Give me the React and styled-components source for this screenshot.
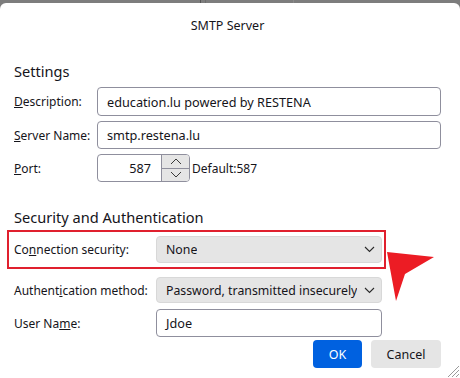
import React from 'react';
import styled, { createGlobalStyle } from 'styled-components';

const GlobalStyle = createGlobalStyle`
  html, body {
    margin: 0;
    padding: 0;
    height: 100%;
    overflow: hidden;
  }
  body {
    background:
      linear-gradient(to right, transparent 200px, #555 200px, #555 201px, transparent 201px, transparent 205px, #6e6e6e 205px, #6e6e6e 206px, transparent 206px, transparent 293px, #8a8a8a 293px, #8a8a8a 294px, transparent 294px),
      #7d7d7d;
    background-size: 100% 3px;
    background-repeat: no-repeat;
    background-color: #7d7d7d;
    font-family: "Noto Sans", "Open Sans", sans-serif;
    color: #15141a;
  }
`;

const Dialog = styled.div`
  position: relative;
  margin-top: 3px;
  height: 375px;
  background: #fff;
  border-radius: 6px 6px 0 0;
  padding: 0 19px 0 14px;
  box-sizing: border-box;
  font-size: 12px;
`;

const Title = styled.div`
  padding-top: 15px;
  height: 58px;
  box-sizing: border-box;
  text-align: center;
  font-size: 12.5px;
  line-height: 16px;
`;

const Heading = styled.div`
  font-size: 14.6px;
  line-height: 20px;
  margin: ${(p) => p.$top || 0}px 0 ${(p) => p.$bottom || 0}px;
`;

const SettingsGrid = styled.div`
  display: grid;
  grid-template-columns: 83px 344px;
  row-gap: 5px;
  align-items: center;
`;

const Label = styled.label`
  font-size: 12px;
  white-space: nowrap;
`;

const TextInput = styled.div`
  height: ${(p) => p.$h || 28}px;
  box-sizing: border-box;
  border: 1px solid #8f8f9d;
  border-radius: 4px;
  background: #fff;
  display: flex;
  align-items: center;
  padding: 0 9px;
  font-size: 12.7px;
`;

const PortRow = styled.div`
  display: flex;
  align-items: center;
`;

const PortBox = styled.div`
  width: 93px;
  height: 28px;
  box-sizing: border-box;
  border: 1px solid #8f8f9d;
  border-radius: 4px;
  display: flex;
  align-items: center;
  overflow: hidden;
`;

const PortValue = styled.div`
  flex: 1;
  text-align: right;
  padding-right: 10px;
  font-size: 12.7px;
`;

const Spinner = styled.div`
  width: 27px;
  height: 100%;
  display: flex;
  flex-direction: column;
  border-left: 1px solid #8f8f9d;
`;

const SpinButton = styled.div`
  flex: 1;
  background: #e5e5e5;
  display: flex;
  align-items: center;
  justify-content: center;
  & + & {
    border-top: 1px solid #8f8f9d;
  }
`;

const DefaultText = styled.span`
  margin-left: 2px;
  font-size: 12px;
`;

const SecurityGrid = styled.div`
  display: flex;
  flex-direction: column;
`;

const Row = styled.div`
  display: grid;
  grid-template-columns: 142px 226px;
  align-items: center;
  margin-top: ${(p) => p.$top || 0}px;
`;

const HighlightRow = styled(Row)`
  margin-left: -7px;
  width: max-content;
  padding: 4px 2px 4px 5px;
  border: 2px solid #e0202e;
`;

const Select = styled.div`
  height: ${(p) => p.$h || 27}px;
  box-sizing: border-box;
  background: #e5e5e5;
  border: 1px solid #d8d8d8;
  border-radius: 4px;
  display: flex;
  align-items: center;
  justify-content: space-between;
  gap: 3px;
  padding: 0 6px 0 9px;
  font-size: 12.3px;
  white-space: nowrap;
  overflow: hidden;
`;

const SelectText = styled.span`
  overflow: hidden;
`;

const ButtonRow = styled.div`
  display: flex;
  justify-content: flex-end;
  gap: 9px;
  margin-top: 3px;
`;

const Button = styled.div`
  height: 28px;
  width: ${(p) => p.$w}px;
  border-radius: 4px;
  display: flex;
  align-items: center;
  justify-content: center;
  font-size: 12.5px;
  background: ${(p) => (p.$primary ? '#0061e0' : '#e5e5e5')};
  color: ${(p) => (p.$primary ? '#fff' : '#15141a')};
`;

const Arrow = styled.svg`
  position: absolute;
  left: 384px;
  top: 246px;
`;

const Grip = styled.svg`
  position: absolute;
  right: 0;
  bottom: 0;
`;

const Chevron = ({ up }) => (
  <svg width="12" height="7" viewBox="0 0 12 7">
    <path
      d={up ? 'M1 6 L6 1 L11 6' : 'M1 1 L6 6 L11 1'}
      fill="none"
      stroke="#3a3a3a"
      strokeWidth="1"
    />
  </svg>
);

const DropChevron = () => (
  <svg width="11" height="7" viewBox="0 0 11 7" style={{ flexShrink: 0 }}>
    <path d="M1 1 L5.5 5.5 L10 1" fill="none" stroke="#2b2b2b" strokeWidth="1.1" />
  </svg>
);

export default function App() {
  return (
    <>
      <GlobalStyle />
      <Dialog>
        <Title>SMTP Server</Title>

        <Heading $bottom={6}>Settings</Heading>
        <SettingsGrid>
          <Label>
            <u>D</u>escription:
          </Label>
          <TextInput $h={29}>education.lu powered by RESTENA</TextInput>
          <Label>
            <u>S</u>erver Name:
          </Label>
          <TextInput>smtp.restena.lu</TextInput>
          <Label>
            <u>P</u>ort:
          </Label>
          <PortRow>
            <PortBox>
              <PortValue>587</PortValue>
              <Spinner>
                <SpinButton>
                  <Chevron up />
                </SpinButton>
                <SpinButton>
                  <Chevron />
                </SpinButton>
              </Spinner>
            </PortBox>
            <DefaultText>Default:587</DefaultText>
          </PortRow>
        </SettingsGrid>

        <Heading $top={25} $bottom={3}>
          Security and Authentication
        </Heading>
        <SecurityGrid>
          <HighlightRow>
            <Label>
              Co<u>n</u>nection security:
            </Label>
            <Select>
              <SelectText>None</SelectText>
              <DropChevron />
            </Select>
          </HighlightRow>
          <Row $top={8}>
            <Label>
              Authent<u>i</u>cation method:
            </Label>
            <Select $h={26}>
              <SelectText>Password, transmitted insecurely</SelectText>
              <DropChevron />
            </Select>
          </Row>
          <Row $top={6}>
            <Label>
              User Na<u>m</u>e:
            </Label>
            <TextInput>Jdoe</TextInput>
          </Row>
        </SecurityGrid>

        <ButtonRow>
          <Button $primary $w={49}>
            OK
          </Button>
          <Button $w={70}>Cancel</Button>
        </ButtonRow>

        <Arrow width="52" height="54" viewBox="0 0 52 54">
          <polygon points="3,3 50,8 21,25 12,52" fill="#ec1c24" />
        </Arrow>
        <Grip width="16" height="16" viewBox="0 0 16 16">
          <path
            d="M15 4 L4 15 M15 8 L8 15 M15 12 L12 15"
            stroke="#9a9a9a"
            strokeWidth="1"
          />
        </Grip>
      </Dialog>
    </>
  );
}
